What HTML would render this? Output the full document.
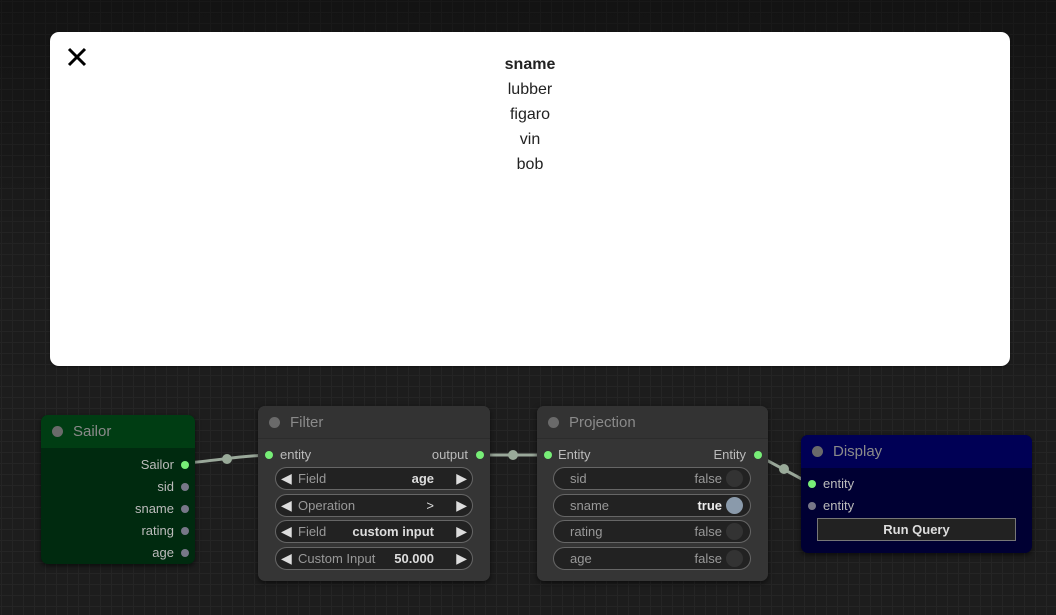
<!DOCTYPE html>
<html><head><style>
*{margin:0;padding:0;box-sizing:border-box}
body{width:1056px;height:615px;overflow:hidden;position:relative;font-family:"Liberation Sans",Arial,sans-serif;
background-color:#1d1d1d;
background-image:linear-gradient(#252525 1px,transparent 1px),linear-gradient(90deg,#252525 1px,transparent 1px);
background-size:11px 11px;background-position:1px 1px}
.vig{position:absolute;left:0;top:0;width:1056px;height:615px;background:linear-gradient(rgba(0,0,0,.35),rgba(0,0,0,0.05) 40%,rgba(0,0,0,0) 70%)}
.modal{position:absolute;left:50px;top:32px;width:960px;height:334px;background:#fff;border-radius:9px;box-shadow:0 1px 2px rgba(0,0,0,.4)}
.x{position:absolute;left:17px;top:15px}
.list{position:absolute;left:0;width:960px;top:20px;text-align:center;font-size:16px;line-height:25px;color:#222}
.node{position:absolute;border-radius:7px;box-shadow:0 2px 6px rgba(0,0,0,.6);overflow:hidden}
.hd{position:relative;height:33px;font-size:15px;color:#8a8a8a;line-height:33px;padding-left:32px}
.hd:before{content:"";position:absolute;left:11px;top:11px;width:11px;height:11px;border-radius:50%;background:#6a6a6a}
.t{position:absolute;font-size:13px;color:#bbb;line-height:16px}
.d{position:absolute;width:8px;height:8px;border-radius:50%}
.g{background:#7e7}.gr{background:#778}
.w{position:absolute;height:23px;border:1px solid #666;border-radius:12px;background:#222;font-size:13px;color:#999;line-height:21px}
.w .l{position:absolute;left:22px}.w .v{position:absolute;color:#ddd;font-weight:bold}
.w .al,.w .ar{position:absolute;color:#ddd;font-size:14px}
.w .al{left:5px}.w .ar{right:5px}
.tg{position:absolute;right:7px;top:2px;width:17px;height:17px;border-radius:50%;background:#333}
</style></head><body>
<div class="vig"></div>
<svg style="position:absolute;left:0;top:0" width="1056" height="615">
<g stroke="#9aa89a" stroke-width="3" fill="none">
<path d="M187 463 C220 460 240 456 269 455"/>
<path d="M480 455 L547 455"/>
<path d="M757 455 L811 484"/>
</g>
<g fill="#99aa99"><circle cx="227" cy="459" r="5"/><circle cx="513" cy="455" r="5"/><circle cx="784" cy="469" r="5"/></g>
</svg>

<div class="node" style="left:41px;top:415px;width:154px;height:149px;background:#002a0f">
<div class="hd" style="background:#003d13">Sailor</div>
<div class="t" style="right:21px;top:42px">Sailor</div><div class="d g" style="left:140px;top:46px"></div>
<div class="t" style="right:21px;top:64px">sid</div><div class="d gr" style="left:140px;top:68px"></div>
<div class="t" style="right:21px;top:86px">sname</div><div class="d gr" style="left:140px;top:90px"></div>
<div class="t" style="right:21px;top:108px">rating</div><div class="d gr" style="left:140px;top:112px"></div>
<div class="t" style="right:21px;top:130px">age</div><div class="d gr" style="left:140px;top:134px"></div>
</div>

<div class="node" style="left:258px;top:406px;width:232px;height:175px;background:#353535">
<div class="hd" style="background:#333;border-bottom:1px solid #2c2c2c">Filter</div>
<div class="d g" style="left:7px;top:45px"></div><div class="t" style="left:22px;top:41px">entity</div>
<div class="t" style="right:22px;top:41px">output</div><div class="d g" style="left:218px;top:45px"></div>
<div class="w" style="left:17px;top:61px;width:198px"><span class="al">◀</span><span class="l">Field</span><span class="v" style="right:38px">age</span><span class="ar">▶</span></div>
<div class="w" style="left:17px;top:88px;width:198px"><span class="al">◀</span><span class="l">Operation</span><span class="v" style="right:38px;font-weight:normal">&gt;</span><span class="ar">▶</span></div>
<div class="w" style="left:17px;top:114px;width:198px"><span class="al">◀</span><span class="l">Field</span><span class="v" style="right:38px">custom input</span><span class="ar">▶</span></div>
<div class="w" style="left:17px;top:141px;width:198px"><span class="al">◀</span><span class="l">Custom Input</span><span class="v" style="right:38px">50.000</span><span class="ar">▶</span></div>
</div>

<div class="node" style="left:537px;top:406px;width:231px;height:175px;background:#353535">
<div class="hd" style="background:#333;border-bottom:1px solid #2c2c2c">Projection</div>
<div class="d g" style="left:7px;top:45px"></div><div class="t" style="left:21px;top:41px">Entity</div>
<div class="t" style="right:22px;top:41px">Entity</div><div class="d g" style="left:217px;top:45px"></div>
<div class="w" style="left:16px;top:61px;width:198px"><span class="l" style="left:16px">sid</span><span class="v" style="right:28px;font-weight:normal;color:#999">false</span><div class="tg"></div></div>
<div class="w" style="left:16px;top:88px;width:198px"><span class="l" style="left:16px">sname</span><span class="v" style="right:28px;color:#eee">true</span><div class="tg" style="background:#8a9aab"></div></div>
<div class="w" style="left:16px;top:114px;width:198px"><span class="l" style="left:16px">rating</span><span class="v" style="right:28px;font-weight:normal;color:#999">false</span><div class="tg"></div></div>
<div class="w" style="left:16px;top:141px;width:198px"><span class="l" style="left:16px">age</span><span class="v" style="right:28px;font-weight:normal;color:#999">false</span><div class="tg"></div></div>
</div>

<div class="node" style="left:801px;top:435px;width:231px;height:118px;background:#000033">
<div class="hd" style="background:#000055">Display</div>
<div class="d g" style="left:7px;top:45px"></div><div class="t" style="left:22px;top:41px">entity</div>
<div class="d gr" style="left:7px;top:67px"></div><div class="t" style="left:22px;top:63px">entity</div>
<div style="position:absolute;left:16px;top:83px;width:199px;height:23px;background:#222;border:1px solid #777;color:#ddd;font-size:13px;font-weight:bold;text-align:center;line-height:21px">Run Query</div>
</div>

<div class="modal">
<svg class="x" width="20" height="20" viewBox="0 0 20 20"><path d="M2 2L18 18M18 2L2 18" stroke="#000" stroke-width="3"/></svg>
<div class="list"><b>sname</b><br>lubber<br>figaro<br>vin<br>bob</div>
</div>
</body></html>
